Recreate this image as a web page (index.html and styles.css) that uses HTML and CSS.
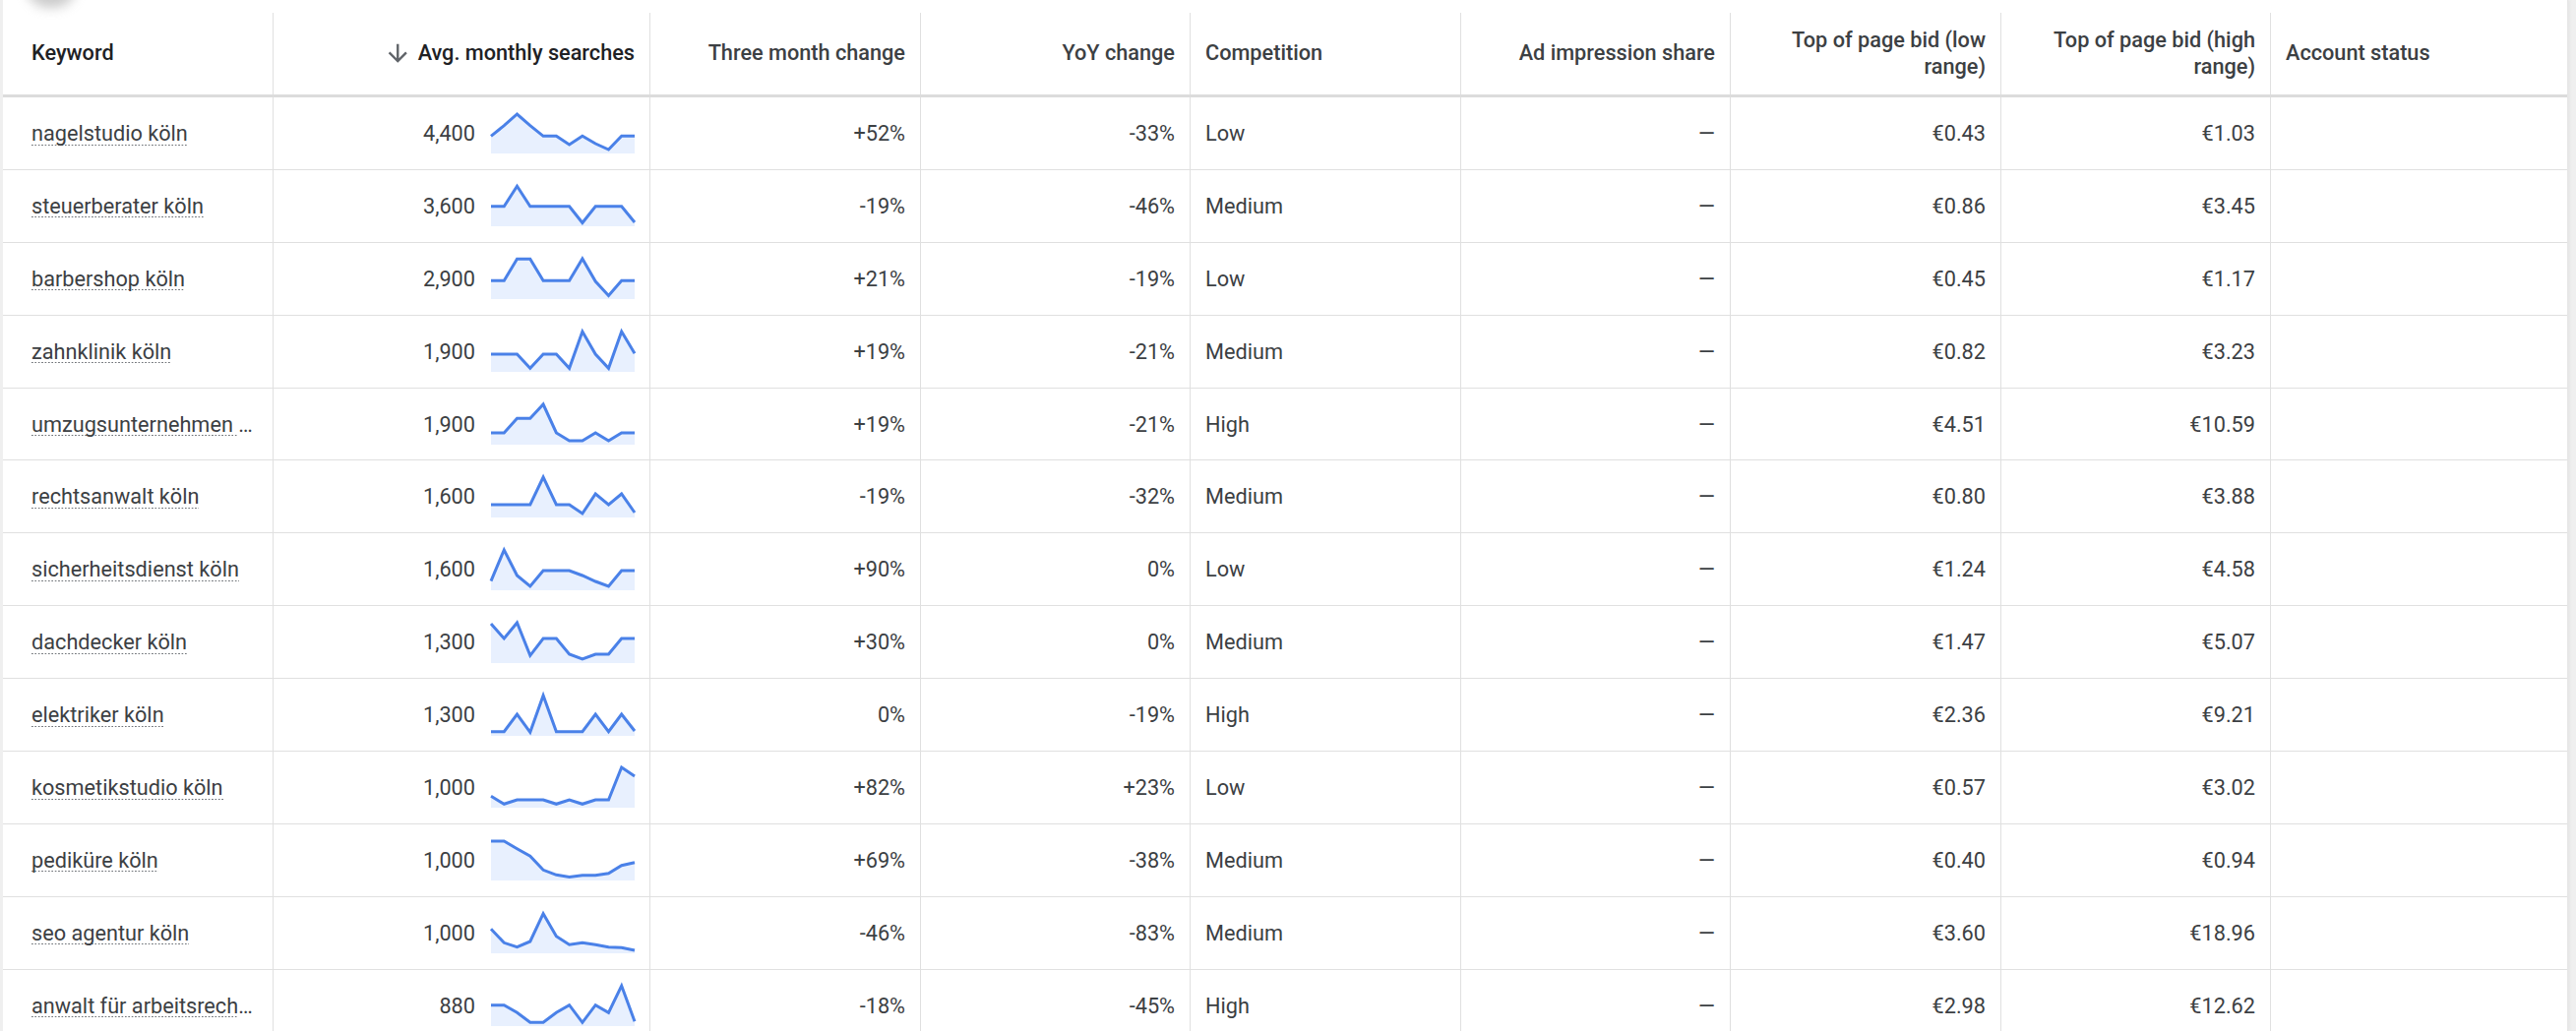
FILE: index.html
```html
<!DOCTYPE html>
<html lang="en">
<head>
<meta charset="utf-8">
<title>Keyword ideas</title>
<link rel="stylesheet" href="styles.css">
</head>
<body>
<div class="page">
  <div class="blob"></div>
  <div class="table">
    <div class="row head">
      <div class="cell kwcol strong">Keyword</div>
      <div class="cell num strong"><svg class="sort" viewBox="0 0 24 24"><path d="M20 12l-1.41-1.41L13 16.17V4h-2v12.17l-5.58-5.59L4 12l8 8 8-8z"/></svg><span>Avg. monthly searches</span></div>
      <div class="cell num">Three month change</div>
      <div class="cell num">YoY change</div>
      <div class="cell">Competition</div>
      <div class="cell num">Ad impression share</div>
      <div class="cell num">Top of page bid (low range)</div>
      <div class="cell num">Top of page bid (high range)</div>
      <div class="cell">Account status</div>
    </div>

    <div class="row">
      <div class="cell kwcol"><span><span class="kw">nagelstudio köln</span></span></div>
      <div class="cell num"><span>4,400</span><svg class="spark" viewBox="0 0 146 42"><polygon class="area" points="0,42 0,24.3 13.3,13.7 26.5,2 39.8,13.7 53.1,24.3 66.4,24.3 79.6,33 92.9,24.3 106.2,32 119.5,38 132.7,24.3 146,24.3 146,42"/><polyline class="line" points="0,24.3 13.3,13.7 26.5,2 39.8,13.7 53.1,24.3 66.4,24.3 79.6,33 92.9,24.3 106.2,32 119.5,38 132.7,24.3 146,24.3"/></svg></div>
      <div class="cell num">+52%</div>
      <div class="cell num">-33%</div>
      <div class="cell">Low</div>
      <div class="cell num">—</div>
      <div class="cell num">€0.43</div>
      <div class="cell num">€1.03</div>
      <div class="cell"></div>
    </div>

    <div class="row">
      <div class="cell kwcol"><span><span class="kw">steuerberater köln</span></span></div>
      <div class="cell num"><span>3,600</span><svg class="spark" viewBox="0 0 146 42"><polygon class="area" points="0,42 0,21.7 13.3,21.7 26.5,1.2 39.8,21.7 53.1,21.7 66.4,21.7 79.6,21.7 92.9,38.5 106.2,21.7 119.5,21.7 132.7,21.7 146,38 146,42"/><polyline class="line" points="0,21.7 13.3,21.7 26.5,1.2 39.8,21.7 53.1,21.7 66.4,21.7 79.6,21.7 92.9,38.5 106.2,21.7 119.5,21.7 132.7,21.7 146,38"/></svg></div>
      <div class="cell num">-19%</div>
      <div class="cell num">-46%</div>
      <div class="cell">Medium</div>
      <div class="cell num">—</div>
      <div class="cell num">€0.86</div>
      <div class="cell num">€3.45</div>
      <div class="cell"></div>
    </div>

    <div class="row">
      <div class="cell kwcol"><span><span class="kw">barbershop köln</span></span></div>
      <div class="cell num"><span>2,900</span><svg class="spark" viewBox="0 0 146 42"><polygon class="area" points="0,42 0,23.3 13.3,23.3 26.5,1.2 39.8,1.2 53.1,23.3 66.4,23.3 79.6,23.3 92.9,1 106.2,24 119.5,38.5 132.7,23.3 146,23.3 146,42"/><polyline class="line" points="0,23.3 13.3,23.3 26.5,1.2 39.8,1.2 53.1,23.3 66.4,23.3 79.6,23.3 92.9,1 106.2,24 119.5,38.5 132.7,23.3 146,23.3"/></svg></div>
      <div class="cell num">+21%</div>
      <div class="cell num">-19%</div>
      <div class="cell">Low</div>
      <div class="cell num">—</div>
      <div class="cell num">€0.45</div>
      <div class="cell num">€1.17</div>
      <div class="cell"></div>
    </div>

    <div class="row">
      <div class="cell kwcol"><span><span class="kw">zahnklinik köln</span></span></div>
      <div class="cell num"><span>1,900</span><svg class="spark" viewBox="0 0 146 42"><polygon class="area" points="0,42 0,24 13.3,24 26.5,24 39.8,38.3 53.1,24 66.4,24 79.6,38.3 92.9,1 106.2,24 119.5,38.3 132.7,1 146,23.3 146,42"/><polyline class="line" points="0,24 13.3,24 26.5,24 39.8,38.3 53.1,24 66.4,24 79.6,38.3 92.9,1 106.2,24 119.5,38.3 132.7,1 146,23.3"/></svg></div>
      <div class="cell num">+19%</div>
      <div class="cell num">-21%</div>
      <div class="cell">Medium</div>
      <div class="cell num">—</div>
      <div class="cell num">€0.82</div>
      <div class="cell num">€3.23</div>
      <div class="cell"></div>
    </div>

    <div class="row">
      <div class="cell kwcol"><span><span class="kw">umzugsunternehmen&nbsp;</span>…</span></div>
      <div class="cell num"><span>1,900</span><svg class="spark" viewBox="0 0 146 42"><polygon class="area" points="0,42 0,30 13.3,30 26.5,15.3 39.8,15.3 53.1,1 66.4,30 79.6,38 92.9,38 106.2,30 119.5,38 132.7,30 146,30 146,42"/><polyline class="line" points="0,30 13.3,30 26.5,15.3 39.8,15.3 53.1,1 66.4,30 79.6,38 92.9,38 106.2,30 119.5,38 132.7,30 146,30"/></svg></div>
      <div class="cell num">+19%</div>
      <div class="cell num">-21%</div>
      <div class="cell">High</div>
      <div class="cell num">—</div>
      <div class="cell num">€4.51</div>
      <div class="cell num">€10.59</div>
      <div class="cell"></div>
    </div>

    <div class="row">
      <div class="cell kwcol"><span><span class="kw">rechtsanwalt köln</span></span></div>
      <div class="cell num"><span>1,600</span><svg class="spark" viewBox="0 0 146 42"><polygon class="area" points="0,42 0,29 13.3,29 26.5,29 39.8,29 53.1,1 66.4,29 79.6,29 92.9,38 106.2,18 119.5,29 132.7,18 146,37 146,42"/><polyline class="line" points="0,29 13.3,29 26.5,29 39.8,29 53.1,1 66.4,29 79.6,29 92.9,38 106.2,18 119.5,29 132.7,18 146,37"/></svg></div>
      <div class="cell num">-19%</div>
      <div class="cell num">-32%</div>
      <div class="cell">Medium</div>
      <div class="cell num">—</div>
      <div class="cell num">€0.80</div>
      <div class="cell num">€3.88</div>
      <div class="cell"></div>
    </div>

    <div class="row">
      <div class="cell kwcol"><span><span class="kw">sicherheitsdienst köln</span></span></div>
      <div class="cell num"><span>1,600</span><svg class="spark" viewBox="0 0 146 42"><polygon class="area" points="0,42 0,32.7 13.3,1 26.5,27 39.8,38 53.1,22 66.4,22 79.6,22 92.9,27 106.2,33 119.5,38 132.7,22 146,22 146,42"/><polyline class="line" points="0,32.7 13.3,1 26.5,27 39.8,38 53.1,22 66.4,22 79.6,22 92.9,27 106.2,33 119.5,38 132.7,22 146,22"/></svg></div>
      <div class="cell num">+90%</div>
      <div class="cell num">0%</div>
      <div class="cell">Low</div>
      <div class="cell num">—</div>
      <div class="cell num">€1.24</div>
      <div class="cell num">€4.58</div>
      <div class="cell"></div>
    </div>

    <div class="row">
      <div class="cell kwcol"><span><span class="kw">dachdecker köln</span></span></div>
      <div class="cell num"><span>1,300</span><svg class="spark" viewBox="0 0 146 42"><polygon class="area" points="0,42 0,2 13.3,17 26.5,1 39.8,34.3 53.1,17 66.4,17 79.6,33 92.9,38 106.2,33 119.5,33 132.7,17 146,17 146,42"/><polyline class="line" points="0,2 13.3,17 26.5,1 39.8,34.3 53.1,17 66.4,17 79.6,33 92.9,38 106.2,33 119.5,33 132.7,17 146,17"/></svg></div>
      <div class="cell num">+30%</div>
      <div class="cell num">0%</div>
      <div class="cell">Medium</div>
      <div class="cell num">—</div>
      <div class="cell num">€1.47</div>
      <div class="cell num">€5.07</div>
      <div class="cell"></div>
    </div>

    <div class="row">
      <div class="cell kwcol"><span><span class="kw">elektriker köln</span></span></div>
      <div class="cell num"><span>1,300</span><svg class="spark" viewBox="0 0 146 42"><polygon class="area" points="0,42 0,37.7 13.3,37.7 26.5,20 39.8,38.3 53.1,1 66.4,37.7 79.6,37.7 92.9,37.7 106.2,20 119.5,37.7 132.7,20 146,37 146,42"/><polyline class="line" points="0,37.7 13.3,37.7 26.5,20 39.8,38.3 53.1,1 66.4,37.7 79.6,37.7 92.9,37.7 106.2,20 119.5,37.7 132.7,20 146,37"/></svg></div>
      <div class="cell num">0%</div>
      <div class="cell num">-19%</div>
      <div class="cell">High</div>
      <div class="cell num">—</div>
      <div class="cell num">€2.36</div>
      <div class="cell num">€9.21</div>
      <div class="cell"></div>
    </div>

    <div class="row">
      <div class="cell kwcol"><span><span class="kw">kosmetikstudio köln</span></span></div>
      <div class="cell num"><span>1,000</span><svg class="spark" viewBox="0 0 146 42"><polygon class="area" points="0,42 0,30.3 13.3,38.3 26.5,34 39.8,34 53.1,34 66.4,38.3 79.6,34 92.9,38.3 106.2,34 119.5,34 132.7,1 146,10 146,42"/><polyline class="line" points="0,30.3 13.3,38.3 26.5,34 39.8,34 53.1,34 66.4,38.3 79.6,34 92.9,38.3 106.2,34 119.5,34 132.7,1 146,10"/></svg></div>
      <div class="cell num">+82%</div>
      <div class="cell num">+23%</div>
      <div class="cell">Low</div>
      <div class="cell num">—</div>
      <div class="cell num">€0.57</div>
      <div class="cell num">€3.02</div>
      <div class="cell"></div>
    </div>

    <div class="row">
      <div class="cell kwcol"><span><span class="kw">pediküre köln</span></span></div>
      <div class="cell num"><span>1,000</span><svg class="spark" viewBox="0 0 146 42"><polygon class="area" points="0,42 0,2 13.3,2 26.5,9.7 39.8,17.3 53.1,31.3 66.4,36.3 79.6,38.5 92.9,36.7 106.2,36.7 119.5,34.7 132.7,26.7 146,23.7 146,42"/><polyline class="line" points="0,2 13.3,2 26.5,9.7 39.8,17.3 53.1,31.3 66.4,36.3 79.6,38.5 92.9,36.7 106.2,36.7 119.5,34.7 132.7,26.7 146,23.7"/></svg></div>
      <div class="cell num">+69%</div>
      <div class="cell num">-38%</div>
      <div class="cell">Medium</div>
      <div class="cell num">—</div>
      <div class="cell num">€0.40</div>
      <div class="cell num">€0.94</div>
      <div class="cell"></div>
    </div>

    <div class="row">
      <div class="cell kwcol"><span><span class="kw">seo agentur köln</span></span></div>
      <div class="cell num"><span>1,000</span><svg class="spark" viewBox="0 0 146 42"><polygon class="area" points="0,42 0,17.3 13.3,31.3 26.5,35.7 39.8,30 53.1,1.7 66.4,24.7 79.6,33.3 92.9,31.3 106.2,33.3 119.5,35.7 132.7,36.3 146,39 146,42"/><polyline class="line" points="0,17.3 13.3,31.3 26.5,35.7 39.8,30 53.1,1.7 66.4,24.7 79.6,33.3 92.9,31.3 106.2,33.3 119.5,35.7 132.7,36.3 146,39"/></svg></div>
      <div class="cell num">-46%</div>
      <div class="cell num">-83%</div>
      <div class="cell">Medium</div>
      <div class="cell num">—</div>
      <div class="cell num">€3.60</div>
      <div class="cell num">€18.96</div>
      <div class="cell"></div>
    </div>

    <div class="row">
      <div class="cell kwcol"><span><span class="kw">anwalt für arbeitsrech</span>…</span></div>
      <div class="cell num"><span>880</span><svg class="spark" viewBox="0 0 146 42"><polygon class="area" points="0,42 0,20.7 13.3,20.7 26.5,28.3 39.8,38.3 53.1,38.3 66.4,28.3 79.6,20.7 92.9,38.3 106.2,20.7 119.5,28.3 132.7,1 146,37.3 146,42"/><polyline class="line" points="0,20.7 13.3,20.7 26.5,28.3 39.8,38.3 53.1,38.3 66.4,28.3 79.6,20.7 92.9,38.3 106.2,20.7 119.5,28.3 132.7,1 146,37.3"/></svg></div>
      <div class="cell num">-18%</div>
      <div class="cell num">-45%</div>
      <div class="cell">High</div>
      <div class="cell num">—</div>
      <div class="cell num">€2.98</div>
      <div class="cell num">€12.62</div>
      <div class="cell"></div>
    </div>
  </div>
</div>
</body>
</html>
```

FILE: styles.css
```css
* { box-sizing: border-box; }
html, body { margin: 0; padding: 0; }
body {
  background: #efefef;
  font-family: Roboto, "Noto Sans", "Liberation Sans", sans-serif;
  font-size: 21.7px;
  color: #3c4043;
  width: 2618px;
  height: 1048px;
  overflow: hidden;
}
.page {
  position: relative;
  margin-left: 3px;
  width: 2606px;
  height: 1048px;
  background: #fff;
  padding-top: 13px;
  overflow: hidden;
  box-shadow: 1px 0 0 #e6e6e6, 3px 0 3px rgba(0,0,0,0.04);
}
.blob {
  position: absolute;
  left: 24px;
  top: -32px;
  width: 50px;
  height: 40px;
  border-radius: 50%;
  background: #b9b9b9;
  opacity: 0.75;
  filter: blur(6px);
}
.row {
  display: grid;
  grid-template-columns: 275px 383px 275px 274px 275px 274px 275px 274px 301px;
  height: 73.9px;
  border-bottom: 1px solid #e0e0e0;
}
.head {
  height: 86px;
  border-bottom: 3px solid #dcdcdc;
  font-weight: 500;
  line-height: 26.7px;
  color: #3c4043;
}
.cell {
  display: flex;
  align-items: center;
  padding: 0 15px;
  border-right: 1px solid #e0e0e0;
  min-width: 0;
  white-space: nowrap;
}
.cell:last-child { border-right: none; }
.num { justify-content: flex-end; text-align: right; }
.head .cell { white-space: normal; }
.kwcol { padding-left: 29px; }
.strong { color: #202124; }
.sort {
  width: 28.5px;
  height: 28.5px;
  flex: none;
  margin-right: 6px;
  fill: #5f6368;
}
.kw {
  background-image: linear-gradient(to right, #6f7378 55%, transparent 55%);
  background-size: 3.4px 1.4px;
  background-repeat: repeat-x;
  background-position: 0 100%;
}
.spark {
  width: 146px;
  height: 42px;
  flex: none;
  margin-left: 16px;
  overflow: visible;
}
.spark .area { fill: #e8f0fe; }
.spark .line {
  fill: none;
  stroke: #4a81e8;
  stroke-width: 3;
  stroke-linejoin: miter;
}
```
